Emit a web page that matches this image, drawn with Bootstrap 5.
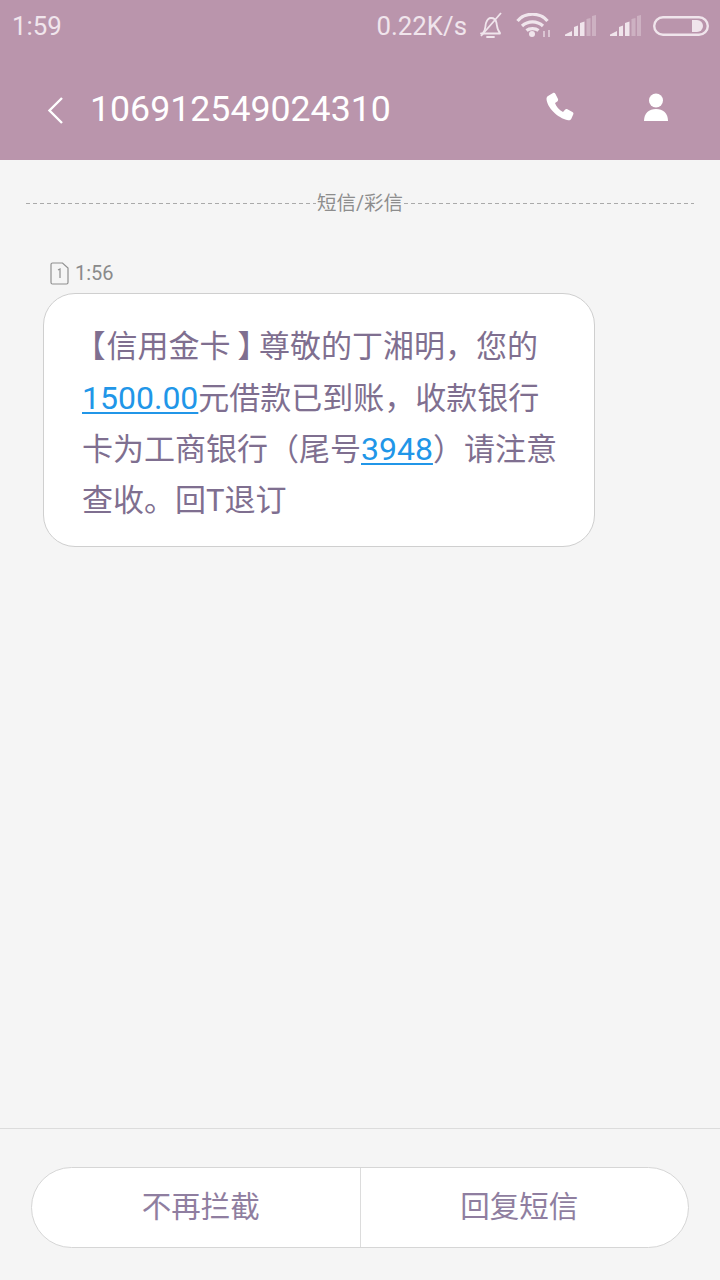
<!DOCTYPE html>
<html lang="zh"><head><meta charset="utf-8">
<link href="https://cdn.jsdelivr.net/npm/bootstrap@5.3.0/dist/css/bootstrap.min.css" rel="stylesheet">
<style>
html,body{width:720px;height:1280px;overflow:hidden}
body{background:#f5f5f5;font-family:Roboto,"Noto Sans CJK SC",sans-serif}
.phone{width:720px;height:1280px}
.head-area{background:#ba95ac;height:160px;flex:none}
.stat{height:52px;padding:0 11px 0 12px;color:#f0e5ec;font-size:25.800px;line-height:52px}
.speed{margin-right:11px}
.ic-wifi{margin-left:12px}
.ic-sig{margin-left:12px}
.ic-sig2{margin-left:12px}
.ic-bat{margin-left:11px}
.title-row{height:108px;padding-top:8px;color:#fff}
.back-ico{margin-left:47px;margin-right:27px}
.num{font-size:35.700px;line-height:1;flex:1}
.act-ph{margin-right:69px;margin-top:-6px}
.act-me{margin-right:52px;margin-top:-6px}
.divider-row{margin:0 26px;height:87px}
.dash{flex:1;height:1px;background:repeating-linear-gradient(90deg,#aaa 0 4px,transparent 4px 7px)}
.div-lbl{font-size:19.500px;color:#8d8d8d;line-height:1;padding:0 1px}
.list-area{flex:1;padding:0 0 0 43px}
.meta{margin-left:7px;height:46px;padding-top:6px;color:#8a8a8a;font-size:20px;gap:6px}
.bubble{width:552px;height:254px;background:#fff;border:1px solid #cfcfcf;border-radius:32px;padding:28px 38px;font-size:31px;line-height:50.500px;color:#7f6f90;white-space:nowrap}
.bubble a{color:#2196e8;font-size:32px;text-decoration:underline;text-underline-offset:3px;text-decoration-thickness:2px}
.brk-open,.brk-close{font-feature-settings:"halt"}
.brk-open{margin:0 1px 0 8px}
.brk-close{margin:0 6px 0 7px}
.foot{height:152px;flex:none;border-top:1px solid #dcdcdc;padding:38px 31px 0}
.pill{height:81px;background:#fff;border:1px solid #d6d6d6;border-radius:41px;overflow:hidden}
.pill-btn{flex:1;border:0;background:none;padding:0;color:#8f7ea0;font-size:29.500px;line-height:1}
.pill-btn:first-child{padding-left:10px}
.pill-btn+.pill-btn{border-left:1px solid #dcdcdc;padding-right:10px}
</style></head><body>
<div class="phone d-flex flex-column">
<div class="head-area d-flex flex-column">
 <div class="stat d-flex justify-content-between align-items-center">
  <span>1:59</span>
  <span class="d-flex align-items-center">
   <span class="speed">0.22K/s</span>
   <svg width="26" height="28" viewBox="0 0 26 28" fill="none" stroke="#f0e5ec" stroke-width="1.800"><path d="M3 21.500h19M5 21c3-3 2-7 3-10 1-3 3-5 5-5 3 0 5 2 5.500 5 .7 4 .5 7 3.500 10M9 25h7" stroke-linecap="round"/><path d="M3 24 23 1"/></svg>
   <svg class="ic-wifi" width="36" height="26" viewBox="0 0 36 26" fill="none" stroke="#f0e5ec" stroke-width="3.200"><path d="M1.500 8C9-1 24-1 31.500 8M6 13c6-5.500 15-5.500 21 0M10.500 17.500c3-2.500 9-2.500 12 0"/><circle cx="16" cy="21" r="3" fill="#f0e5ec" stroke="none"/><path d="M28 18v6M33 17v7" stroke-width="1.600" opacity=".75"/></svg>
   <svg class="ic-sig" width="33" height="22" viewBox="0 0 33 22"><path fill="#f0e5ec" d="M1 21v-1.500L8 16v5zM10 21v-9l4-1.500V21zM16 21V8l4.500-1.500V21z"/><path fill="#f0e5ec" opacity=".35" d="M22.500 21V4l4-1v18zM28 21V1l4-1v21z"/></svg>
   <svg class="ic-sig2" width="33" height="22" viewBox="0 0 33 22"><path fill="#f0e5ec" d="M1 21v-1.500L8 16v5zM10 21v-9l4-1.500V21zM16 21V8l4.500-1.500V21z"/><path fill="#f0e5ec" opacity=".35" d="M22.500 21V4l4-1v18zM28 21V1l4-1v21z"/></svg>
   <svg class="ic-bat" width="56" height="20" viewBox="0 0 56 20"><rect x="1.200" y="1.200" width="53.600" height="17.600" rx="8.800" fill="none" stroke="#f0e5ec" stroke-width="2.400"/><path fill="#f0e5ec" d="M39 4h5a6 6 0 0 1 0 12h-5z"/></svg>
  </span>
 </div>
 <div class="title-row d-flex align-items-center">
  <svg class="back-ico" width="16" height="27" viewBox="0 0 16 27" fill="none" stroke="#fff" stroke-width="2.400"><path d="M15 1 2.500 13.500 15 26"/></svg>
  <span class="num">106912549024310</span>
  <svg class="act-ph" width="30" height="30" viewBox="0 0 30 30"><path fill="#fff" d="M3 4 8 1c1-.5 2 0 2.500 1l2.500 5c.3 1 0 1.800-.7 2.400L10 11c1 3 4 7 8 9l2-2.300c.7-.7 1.500-.8 2.400-.4l5 2.700c1 .6 1.300 1.500.8 2.500l-2 4.500c-.7 1.200-1.700 1.500-3 1.300C12 26 2 15 1.500 7c0-1.300.5-2.300 1.500-3z"/></svg>
  <svg class="act-me" width="24" height="28" viewBox="0 0 24 28"><circle cx="12" cy="7.500" r="7" fill="#fff"/><path fill="#fff" d="M0 28c0-8 5-12 12-12s12 4 12 12z"/></svg>
 </div>
</div>
<div class="divider-row d-flex align-items-center">
 <span class="dash"></span><span class="div-lbl">短信/彩信</span><span class="dash"></span>
</div>
<div class="list-area">
 <div class="meta d-flex align-items-center">
  <svg width="19" height="23" viewBox="0 0 19 23" fill="none" stroke="#909090" stroke-width="1.200"><path d="M2.500 1h10l5.500 5v14.500a1.500 1.500 0 0 1-1.500 1.500h-14A1.500 1.500 0 0 1 1 20.500v-18A1.500 1.500 0 0 1 2.500 1z"/><path d="M8 8l2-1v9"/></svg>
  <span>1:56</span>
 </div>
 <div class="bubble"><span class="brk-open">【</span>信用金卡<span class="brk-close">】</span>尊敬的丁湘明，您的<br><a href="#">1500.00</a>元借款已到账，收款银行<br>卡为工商银行（尾号<a href="#">3948</a>）请注意<br>查收。回T退订</div>
</div>
<div class="foot">
 <div class="pill d-flex">
  <button class="pill-btn" type="button">不再拦截</button>
  <button class="pill-btn" type="button">回复短信</button>
 </div>
</div>
</div>
</body></html>
